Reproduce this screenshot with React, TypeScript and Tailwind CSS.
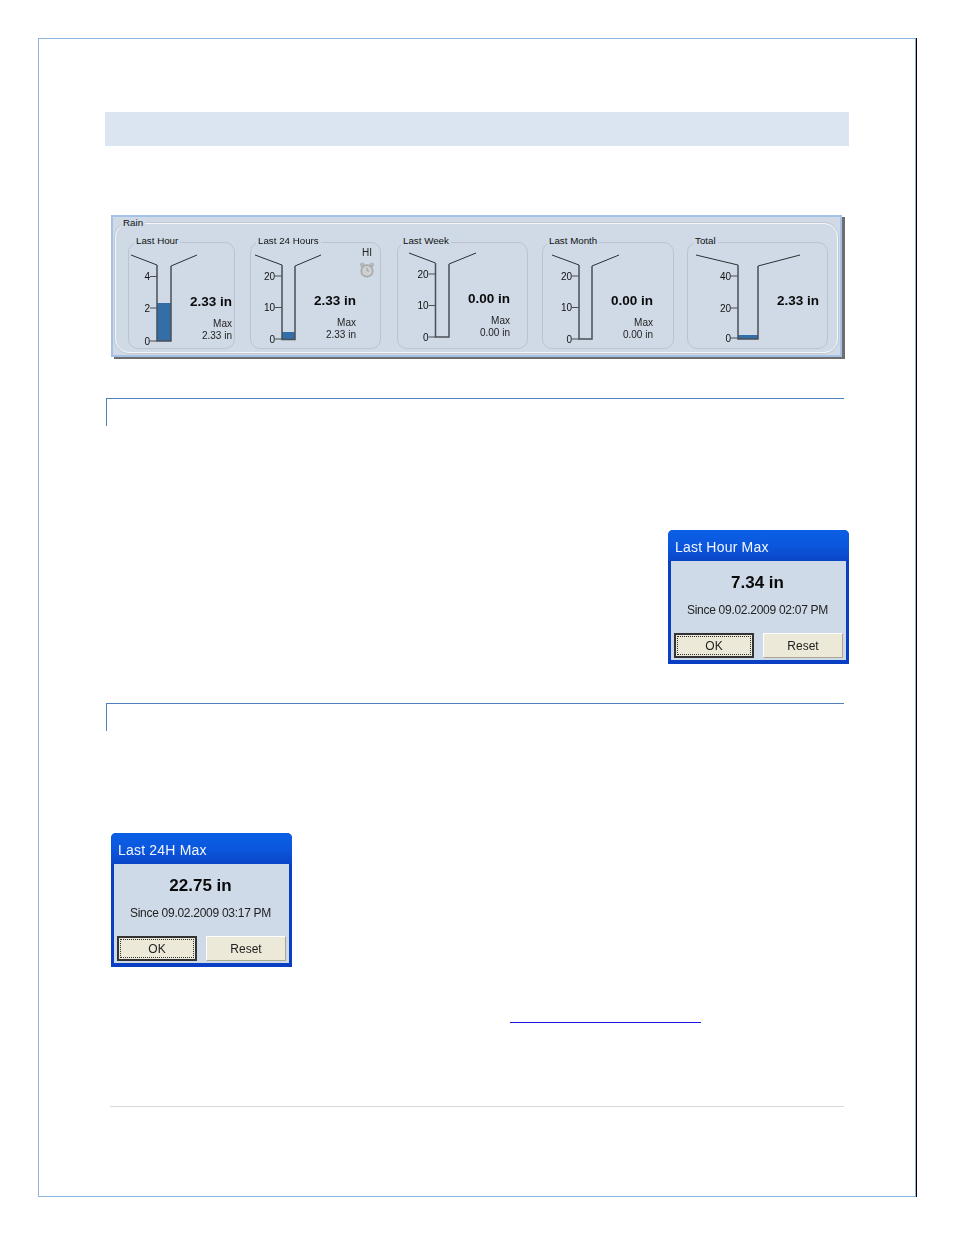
const font = "[font-family:'Liberation_Sans',Arial,sans-serif]"

interface Tick {
  label: string
  y: number
}

interface Card {
  title: string
  left: number
  cardClass: string
  labelClass: string
  textClass: string
  tipL: number
  wallL: number
  wallR: number
  tipR: number
  tipY: number
  wallY: number
  bottom: number
  ticks: Tick[]
  fillTop?: number
  value: string
  max?: string
  alarm?: boolean
}

const cards: Card[] = [
  {
    title: 'Last Hour', left: 128, cardClass: 'w-[107px]', labelClass: 'left-[5px]', textClass: 'pr-[2px] pt-[51px]',
    tipL: 131, wallL: 157, wallR: 171, tipR: 197, tipY: 255, wallY: 266, bottom: 341,
    ticks: [{ label: '4', y: 276.5 }, { label: '2', y: 308 }, { label: '0', y: 341 }],
    fillTop: 303, value: '2.33 in', max: '2.33 in',
  },
  {
    title: 'Last 24 Hours', left: 250, cardClass: 'ml-[15px] w-[131px]', labelClass: 'left-[5px]', textClass: 'pr-[24px] pt-[50px]',
    tipL: 255, wallL: 282, wallR: 295, tipR: 321, tipY: 255, wallY: 266, bottom: 339.5,
    ticks: [{ label: '20', y: 276 }, { label: '10', y: 307.5 }, { label: '0', y: 339 }],
    fillTop: 332, value: '2.33 in', max: '2.33 in', alarm: true,
  },
  {
    title: 'Last Week', left: 397, cardClass: 'ml-[16px] w-[131px]', labelClass: 'left-[3px]', textClass: 'pr-[17px] pt-[48px]',
    tipL: 409, wallL: 435.5, wallR: 449, tipR: 476, tipY: 253, wallY: 264, bottom: 337,
    ticks: [{ label: '20', y: 274 }, { label: '10', y: 305.5 }, { label: '0', y: 337 }],
    value: '0.00 in', max: '0.00 in',
  },
  {
    title: 'Last Month', left: 542, cardClass: 'ml-[14px] w-[132px]', labelClass: 'left-[4px]', textClass: 'pr-[20px] pt-[50px]',
    tipL: 552, wallL: 579, wallR: 592, tipR: 619, tipY: 255, wallY: 266, bottom: 339,
    ticks: [{ label: '20', y: 276 }, { label: '10', y: 307.5 }, { label: '0', y: 339 }],
    value: '0.00 in', max: '0.00 in',
  },
  {
    title: 'Total', left: 687, cardClass: 'ml-[13px] w-[141px]', labelClass: 'left-[5px]', textClass: 'pr-[8px] pt-[50px]',
    tipL: 696, wallL: 738, wallR: 758, tipR: 800, tipY: 255, wallY: 266, bottom: 339,
    ticks: [{ label: '40', y: 276 }, { label: '20', y: 308 }, { label: '0', y: 338 }],
    fillTop: 335, value: '2.33 in',
  },
]

function Gauge({ card }: { card: Card }) {
  const originX = card.left + 1
  const w = card.wallR + 10 - originX
  return (
    <svg
      width={w}
      height={105}
      viewBox={`${originX} 243 ${w} 105`}
      className="shrink-0 overflow-visible"
    >
      {card.fillTop !== undefined && (
        <rect
          x={card.wallL}
          y={card.fillTop}
          width={card.wallR - card.wallL}
          height={card.bottom - card.fillTop}
          fill="#336ea8"
        />
      )}
      <polyline
        points={`${card.tipL},${card.tipY} ${card.wallL},${card.wallY - 1}`}
        fill="none"
        stroke="#2c2f33"
        strokeWidth="1"
      />
      <polyline
        points={`${card.wallR},${card.wallY} ${card.tipR},${card.tipY}`}
        fill="none"
        stroke="#2c2f33"
        strokeWidth="1"
      />
      <polyline
        points={`${card.wallL},${card.wallY - 1} ${card.wallL},${card.bottom} ${card.wallR},${card.bottom} ${card.wallR},${card.wallY}`}
        fill="none"
        stroke="#4a4f55"
        strokeWidth="1.5"
      />
      {card.ticks.map((t) => (
        <g key={t.label}>
          <line x1={card.wallL - 7} x2={card.wallL} y1={t.y} y2={t.y} stroke="#4a4f55" strokeWidth="1" />
          <text
            x={card.wallL - 7}
            y={t.y + 3.5}
            textAnchor="end"
            fontSize="10"
            fill="#111"
            fontFamily="Liberation Sans, Arial, sans-serif"
          >
            {t.label}
          </text>
        </g>
      ))}
    </svg>
  )
}

function AlarmIcon() {
  return (
    <svg width="16" height="18" viewBox="0 0 17 18">
      <circle cx="3.5" cy="3.5" r="2.5" fill="#b4b8b8" />
      <circle cx="13.5" cy="3.5" r="2.5" fill="#b4b8b8" />
      <circle cx="8.5" cy="10" r="7" fill="#a6aaaa" />
      <circle cx="8.5" cy="10" r="5.2" fill="#cfd2d0" />
      <path d="M8.5 6.5V10H11" fill="none" stroke="#9a9e9e" strokeWidth="1" />
    </svg>
  )
}

function GaugeCard({ card }: { card: Card }) {
  return (
    <div className={`relative flex h-[107px] rounded-[10px] border border-[#bcc3cc] ${card.cardClass}`}>
      <span className={`absolute -top-[8px] bg-[#cfdae6] px-[2px] text-[9.75px] leading-[12px] text-[#111] ${card.labelClass}`}>
        {card.title}
      </span>
      <Gauge card={card} />
      <div className={`flex flex-1 flex-col items-end ${card.textClass}`}>
        <div className="text-[13.5px] leading-[16px] font-bold text-[#0a0a0a]">{card.value}</div>
        {card.max && (
          <div className="mt-[8px] flex flex-col items-end text-[10px] leading-[11.5px] text-[#222]">
            <span>Max</span>
            <span>{card.max}</span>
          </div>
        )}
      </div>
      {card.alarm && (
        <div className="absolute top-[4px] right-[5px] flex flex-col items-center gap-[2px] text-[10px] leading-[12px] text-[#222]">
          <span>HI</span>
          <AlarmIcon />
        </div>
      )}
    </div>
  )
}

function MaxDialog({ title, value, since, className }: { title: string; value: string; since: string; className: string }) {
  return (
    <div className={`flex h-[134px] w-[181px] flex-col rounded-t-[5px] bg-[#0a3fc4] px-[3px] pb-[4px] blur-[0.3px] ${className}`}>
      <div className="-mx-[3px] h-[31px] shrink-0 rounded-t-[5px] bg-gradient-to-b from-[#0a5fe6] via-[#0b57dd] to-[#0a45c8] pl-[7px] pt-[9px] text-[14px] leading-[17px] tracking-[0.2px] text-[#f2f6ff]">
        {title}
      </div>
      <div className="flex flex-1 flex-col items-center bg-[#cfdae8]">
        <div className="mt-[12px] -translate-x-px text-[17px] leading-[20px] font-bold text-[#0a0a0a]">{value}</div>
        <div className="mt-[10px] -translate-x-px text-[12px] leading-[14px] tracking-[-0.28px] text-[#222]">{since}</div>
        <div className="mt-[16px] flex w-full justify-between px-[3px]">
          <div className="flex h-[25px] w-[80px] items-center justify-center border-2 border-[#333] bg-[#ece9d8] p-[1px]">
            <div className="flex h-full w-full items-center justify-center border border-dotted border-[#333] text-[12px] text-[#222]">
              OK
            </div>
          </div>
          <div className="flex h-[25px] w-[80px] items-center justify-center border border-t-white border-l-white border-r-[#a9a692] border-b-[#a9a692] bg-[#ece9d8] text-[12px] text-[#222]">
            Reset
          </div>
        </div>
      </div>
    </div>
  )
}

export default function App() {
  return (
    <div className={`h-[1235px] w-[954px] bg-white pt-[38px] pl-[38px] ${font}`}>
      <div className="h-[1159px] w-[878px] border border-[#8db3e2] shadow-[1px_0_0_#000]">
        <div className="mt-[73px] ml-[66px] h-[34px] w-[744px] bg-[#dbe5f1]" />

        <div className="mt-[69px] ml-[72px] h-[142px] w-[731px] border-2 border-[#a3c2e6] bg-[#cfdae6] pt-[6px] pl-[2px] shadow-[3px_2px_0_#6e6e6e] blur-[0.3px]">
          <div className="relative h-[130px] w-[723px] rounded-[14px] border border-[#f4f6f9] pt-[18px] pl-[12px] shadow-[0_0_0_1px_#c2c9d2]">
            <span className="absolute -top-[7px] left-[5px] bg-[#cfdae6] px-[2px] text-[9.75px] leading-[12px] text-[#111]">
              Rain
            </span>
            <div className="flex">
              {cards.map((c) => (
                <GaugeCard key={c.title} card={c} />
              ))}
            </div>
          </div>
        </div>

        <div className="mt-[41px] ml-[67px] h-[28px] w-[738px] border-t border-l border-[#4f81bd]" />
        <MaxDialog
          className="mt-[104px] ml-[629px]"
          title="Last Hour Max"
          value="7.34 in"
          since="Since 09.02.2009 02:07 PM"
        />
        <div className="mt-[39px] ml-[67px] h-[28px] w-[738px] border-t border-l border-[#4f81bd]" />
        <MaxDialog
          className="mt-[102px] ml-[72px]"
          title="Last 24H Max"
          value="22.75 in"
          since="Since 09.02.2009 03:17 PM"
        />
        <a className="mt-[55px] ml-[471px] block h-px w-[191px] bg-[#1a1ae0]" href="#" aria-label="link" />
        <div className="mt-[83px] ml-[71px] h-px w-[734px] bg-[#d9d9d9]" />
      </div>
    </div>
  )
}
